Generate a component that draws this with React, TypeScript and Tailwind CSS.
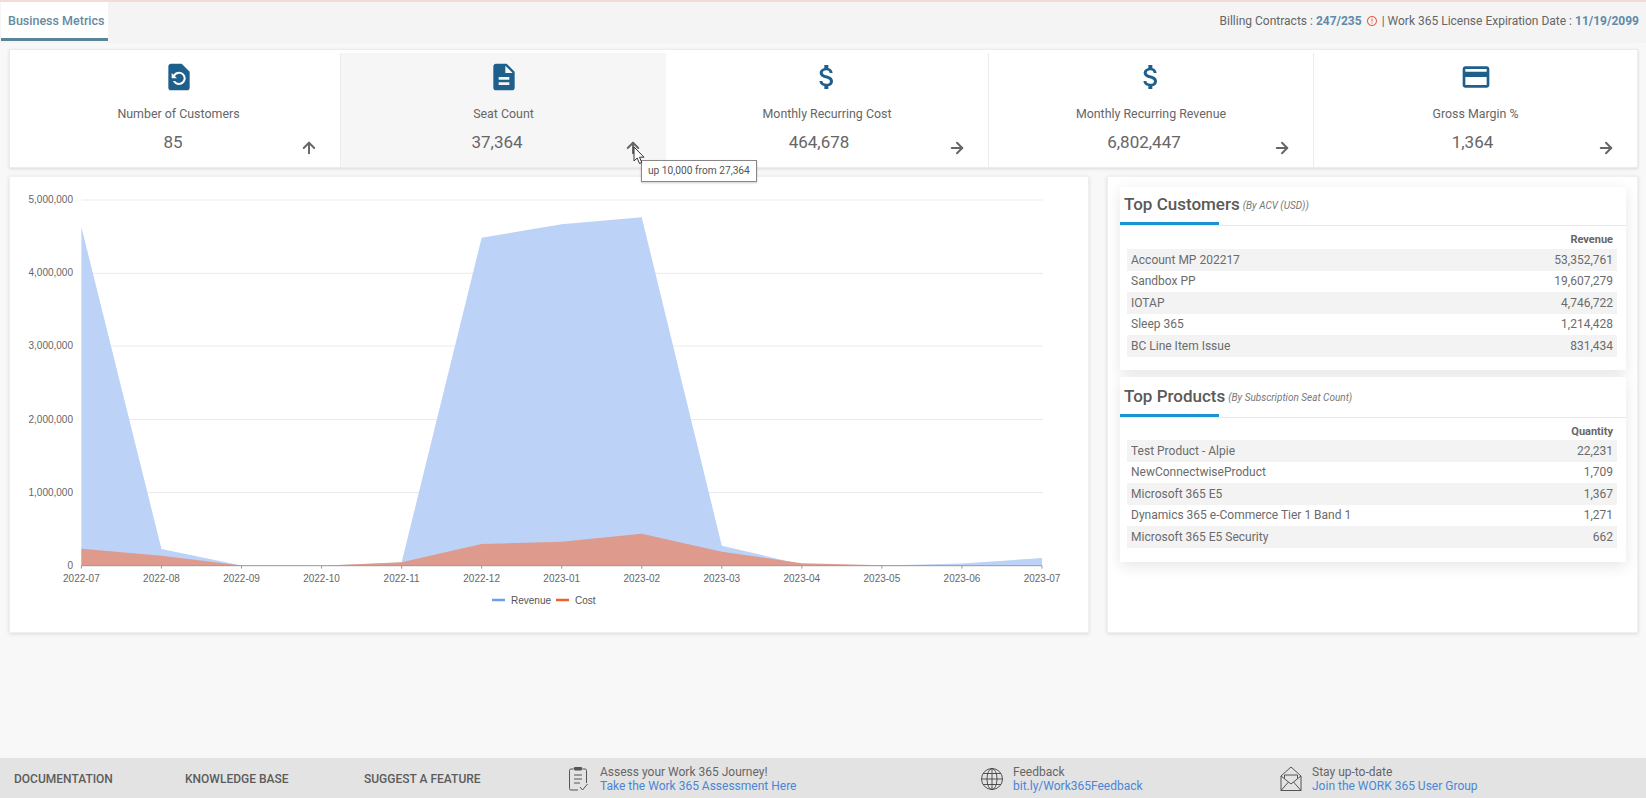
import React from 'react';
import {
  MdRestorePage,
  MdDescription,
  MdAttachMoney,
  MdCreditCard,
  MdErrorOutline,
} from 'react-icons/md';
import { ArrowUp, ArrowRight } from 'lucide-react';

const kpis = [
  { label: 'Number of Customers', value: '85', Icon: MdRestorePage, Arrow: ArrowUp, cell: 'w-[331px] pl-[7px] border-r border-[#ececec]', row: 'pl-[29px] pr-[22px]' },
  { label: 'Seat Count', value: '37,364', Icon: MdDescription, Arrow: ArrowUp, cell: 'w-[325px] bg-[#f6f6f7]', row: 'pl-[29px] pr-[24px]' },
  { label: 'Monthly Recurring Cost', value: '464,678', Icon: MdAttachMoney, Arrow: ArrowRight, cell: 'w-[323px] border-r border-[#ececec]', row: 'pl-[24px] pr-[22px]' },
  { label: 'Monthly Recurring Revenue', value: '6,802,447', Icon: MdAttachMoney, Arrow: ArrowRight, cell: 'w-[325px] border-r border-[#ececec]', row: 'pl-[26px] pr-[22px]' },
  { label: 'Gross Margin %', value: '1,364', Icon: MdCreditCard, Arrow: ArrowRight, cell: 'flex-1', row: 'pl-[34px] pr-[22px]' },
];

const customers = [
  ['Account MP 202217', '53,352,761'],
  ['Sandbox PP', '19,607,279'],
  ['IOTAP', '4,746,722'],
  ['Sleep 365', '1,214,428'],
  ['BC Line Item Issue', '831,434'],
];

const products = [
  ['Test Product - Alpie', '22,231'],
  ['NewConnectwiseProduct', '1,709'],
  ['Microsoft 365 E5', '1,367'],
  ['Dynamics 365 e-Commerce Tier 1 Band 1', '1,271'],
  ['Microsoft 365 E5 Security', '662'],
];

const months = [
  '2022-07', '2022-08', '2022-09', '2022-10', '2022-11', '2022-12', '2023-01',
  '2023-02', '2023-03', '2023-04', '2023-05', '2023-06', '2023-07',
];

const X0 = 81.4;
const STEP = 80.05;
const Y0 = 565.7;
const xAt = (i: number) => X0 + i * STEP;

const revenueY = [227, 549, 565.5, 565.7, 562.5, 237.7, 224.3, 217.3, 545.7, 564.5, 565.5, 563.5, 558];
const costY = [548.7, 555.7, 565.5, 565.7, 562.3, 544, 541.7, 533.7, 551.7, 563.3, 565.3, 565.7, 565.7];

const areaPoints = (ys: number[]) =>
  `${X0},${Y0} ` + ys.map((y, i) => `${xAt(i)},${y}`).join(' ') + ` ${xAt(12)},${Y0}`;

const grid = [
  { y: 200, label: '5,000,000' },
  { y: 273.3, label: '4,000,000' },
  { y: 346, label: '3,000,000' },
  { y: 419.5, label: '2,000,000' },
  { y: 492.5, label: '1,000,000' },
];

function Chart() {
  // viewBox uses page coordinates so points read straight off the screenshot
  return (
    <svg viewBox="10 177 1078 455" className="block w-full h-full" style={{ fontFamily: '"Liberation Sans", Arial, sans-serif' }}>
      {grid.map((g) => (
        <g key={g.label}>
          <line x1={X0} x2={xAt(12) + 1} y1={g.y} y2={g.y} stroke="#ebebeb" strokeWidth="1" />
          <text x="73" y={g.y + 3} textAnchor="end" fontSize="10" fill="#666">{g.label}</text>
        </g>
      ))}
      <text x="73" y={Y0 + 3} textAnchor="end" fontSize="10" fill="#666">0</text>
      <polygon points={areaPoints(revenueY)} fill="#bcd2f7" />
      <polygon points={areaPoints(costY)} fill="#de9a8c" />
      <line x1={X0} x2={xAt(12)} y1={Y0} y2={Y0} stroke="#999" strokeWidth="1" />
      {months.map((m, i) => (
        <g key={m}>
          <line x1={xAt(i)} x2={xAt(i)} y1={Y0} y2={Y0 + 3} stroke="#999" strokeWidth="1" />
          <text x={xAt(i)} y="582" textAnchor="middle" fontSize="10" fill="#666">{m}</text>
        </g>
      ))}
      <line x1="492" x2="505" y1="600" y2="600" stroke="#6d9eeb" strokeWidth="2.5" />
      <text x="511" y="603.5" fontSize="10" fill="#555">Revenue</text>
      <line x1="556" x2="569" y1="600" y2="600" stroke="#e8642c" strokeWidth="2.5" />
      <text x="575" y="603.5" fontSize="10" fill="#555">Cost</text>
    </svg>
  );
}

function TopList({ title, sub, head, rows, className, titleH, headH }: { title: string; sub: string; head: string; rows: string[][]; className: string; titleH: string; headH: string }) {
  return (
    <div className={`bg-white shadow-[0_4px_14px_rgba(0,0,0,0.1)] ${className}`}>
      <div className="border-b border-[#e8e8e8]">
        <div className={`flex items-center pl-1 gap-[3px] text-[#5a5a5a] ${titleH}`}>
          <span className="text-[17px] font-medium">{title}</span>
          <span className="text-[10px] italic text-[#777] mt-[1px]">{sub}</span>
        </div>
        <div className="w-[99px] h-[3px] bg-[#1b95d2]" />
      </div>
      <div className="ml-[7px] mr-[9px]">
        <div className={`pt-[7px] px-1 text-right text-[11px] leading-[14px] font-bold text-[#666] ${headH}`}>{head}</div>
        {rows.map((r, i) => (
          <div key={r[0]} className={`flex justify-between items-center h-[21.5px] px-1 text-[12px] text-[#6b6b6b] ${i % 2 === 0 ? 'bg-[#f3f3f4]' : ''}`}>
            <span>{r[0]}</span>
            <span>{r[1]}</span>
          </div>
        ))}
      </div>
    </div>
  );
}

function FooterLink({ icon, text, link, className }: { icon: React.ReactNode; text: string; link: string; className: string }) {
  return (
    <div className={`flex items-center ${className}`}>
      {icon}
      <div className="text-[12px] leading-[14.5px]">
        <div className="text-[#666]">{text}</div>
        <div className="text-[#4a86d8]">{link}</div>
      </div>
    </div>
  );
}

export default function App() {
  return (
    <div className="relative flex flex-col h-screen overflow-hidden bg-[#f8f8f9]" style={{ fontFamily: 'Roboto, sans-serif' }}>
      <div className="h-[2px] bg-[#f3dcd8]" />

      {/* tab bar */}
      <div className="flex justify-between h-[41px] bg-[#f4f4f5] pl-[1px] pr-[7px]">
        <div className="w-[107px] h-[39px] bg-white border-b-[3px] border-[#5b8596] pl-[7px] pt-[11px] text-[12.5px] font-medium leading-[16px] text-[#67899f]">
          Business Metrics
        </div>
        <div className="flex items-center h-[38px] text-[12px] text-[#666]">
          Billing Contracts :&nbsp;<span className="font-bold text-[#5f8aa8]">247/235</span>
          <MdErrorOutline size={12} className="mx-[4px] text-[#e8604c]" />| Work 365 License Expiration Date :&nbsp;
          <span className="font-bold text-[#5f8aa8]">11/19/2099</span>
        </div>
      </div>

      {/* kpi strip */}
      <div className="flex mt-[6px] mx-[9px] mr-[8px] h-[119px] pt-[3px] bg-white border border-[#ececec] shadow-[0_1px_3px_rgba(0,0,0,0.12)]">
        {kpis.map(({ label, value, Icon, Arrow, cell, row }) => (
          <div key={label} className={`flex flex-col items-center pt-[8px] ${cell}`}>
            <Icon size={32} className="text-[#1f5f8b]" />
            <div className="mt-[13px] text-[12.4px] leading-[16px] text-[#666]">{label}</div>
            <div className={`flex w-full mt-[10px] ${row}`}>
              <div className="flex-1 text-center text-[17px] leading-[20px] text-[#666]">{value}</div>
              <Arrow size={18} strokeWidth={2.6} className="mt-[7px] text-[#666]" />
            </div>
          </div>
        ))}
      </div>

      {/* chart and top lists */}
      <div className="flex justify-between mt-[8px] ml-[9px] mr-[8px] h-[457px]">
        <div className="w-[1080px] bg-white border border-[#f0f0f0] shadow-[0_1px_4px_rgba(0,0,0,0.12)]">
          <Chart />
        </div>
        <div className="w-[531px] bg-white pl-[12px] pr-[11px] pt-[10px] border border-[#f0f0f0] shadow-[0_1px_4px_rgba(0,0,0,0.12)]">
          <TopList title="Top Customers" sub="(By ACV (USD))" head="Revenue" rows={customers} className="h-[183px]" titleH="h-[35px]" headH="h-[23px]" />
          <TopList title="Top Products" sub="(By Subscription Seat Count)" head="Quantity" rows={products} className="h-[185px] mt-[7px]" titleH="h-[37px] pt-[3px]" headH="h-[22px]" />
        </div>
      </div>

      {/* footer */}
      <div className="flex items-center mt-auto h-[40px] pt-[2px] bg-[#e3e3e3] text-[12px] font-medium text-[#5c5c5c]">
        <div className="w-[185px] pl-[14px]">DOCUMENTATION</div>
        <div className="w-[179px]">KNOWLEDGE BASE</div>
        <div className="w-[202px]">SUGGEST A FEATURE</div>
        <FooterLink
          className="w-[414px] font-normal"
          text="Assess your Work 365 Journey!"
          link="Take the Work 365 Assessment Here"
          icon={
            <svg width="24" height="26" viewBox="0 0 24 26" fill="none" stroke="#555" strokeWidth="1" className="mr-[10px]">
              <path d="M7 3H5Q3.5 3 3.5 4.5V22.5Q3.5 24 5 24H12M17 3H19Q20.5 3 20.5 4.5V17" />
              <rect x="8" y="1.5" width="8" height="2.5" rx="1" fill="#555" />
              <path d="M8 9H16M8 13H16M8 17H14M14 21L16.5 24L21.5 18" />
            </svg>
          }
        />
        <FooterLink
          className="w-[299px] font-normal"
          text="Feedback"
          link="bit.ly/Work365Feedback"
          icon={
            <svg width="24" height="24" viewBox="0 0 24 24" fill="none" stroke="#444" strokeWidth="0.9" className="mr-[9px]">
              <circle cx="12" cy="12" r="10.5" />
              <ellipse cx="12" cy="12" rx="5" ry="10.5" />
              <path d="M12 1.5V22.5M1.5 12H22.5M3 6.5H21M3 17.5H21" />
            </svg>
          }
        />
        <FooterLink
          className="font-normal"
          text="Stay up-to-date"
          link="Join the WORK 365 User Group"
          icon={
            <svg width="24" height="26" viewBox="0 0 24 26" fill="none" stroke="#444" strokeWidth="0.9" className="mr-[9px]">
              <path d="M2 10L12 1L22 10V24.5H2Z" />
              <path d="M5.5 12.5V9H18.5V12.5M2 10L12 18L22 10M2 24.5L9.5 16M22 24.5L14.5 16" />
            </svg>
          }
        />
      </div>

      {/* hover tooltip + mouse pointer */}
      <div className="absolute left-[641px] top-[160px] h-[22px] px-[6px] bg-white border border-[#888] text-[10.2px] leading-[20px] text-[#555] shadow-[0_1px_2px_rgba(0,0,0,0.2)]">
        up 10,000 from 27,364
      </div>
      <svg width="12" height="19" viewBox="0 0 12 19" className="absolute left-[633px] top-[146px]">
        <path d="M1 1V15L4.2 12L6.5 17.5L8.8 16.5L6.5 11.2H11Z" fill="#fff" stroke="#333" strokeWidth="1" />
      </svg>
    </div>
  );
}
